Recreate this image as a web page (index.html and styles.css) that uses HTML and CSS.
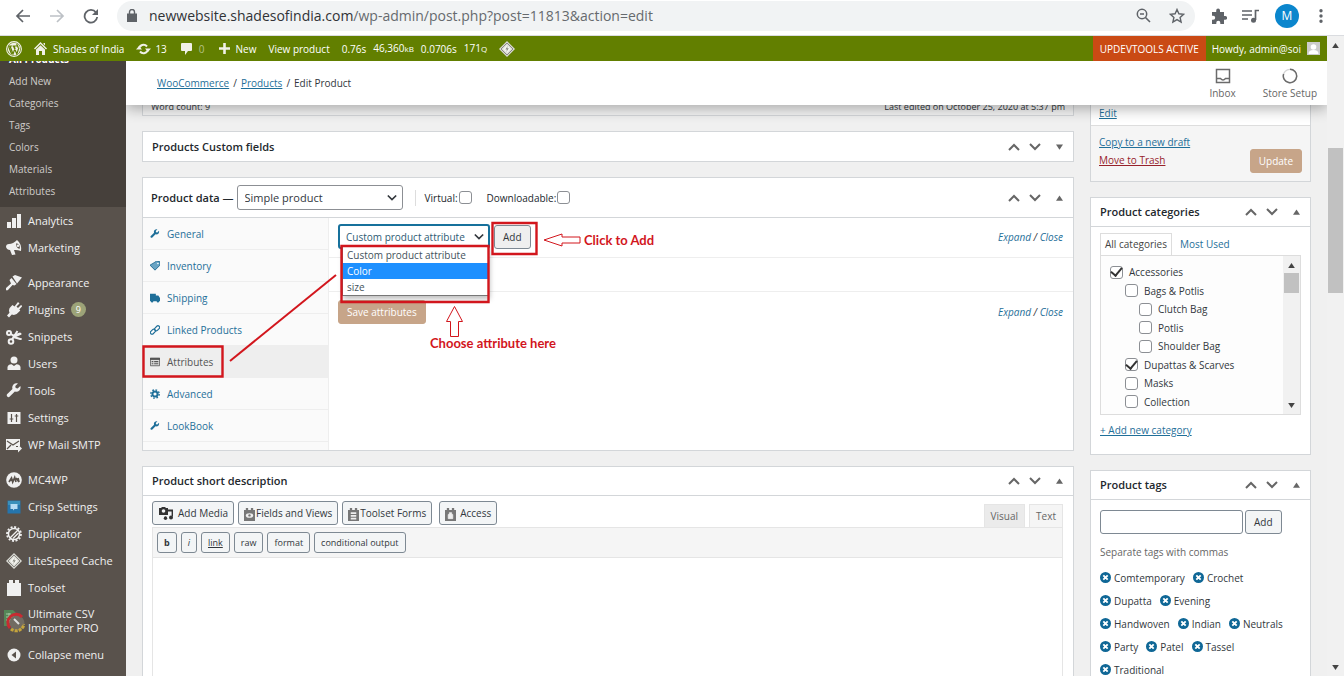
FILE: index.html
```html
<!DOCTYPE html>
<html lang="en">
<head>
<meta charset="utf-8">
<title>Edit Product</title>
<link rel="stylesheet" href="styles.css">
</head>
<body>
<svg class="defs" aria-hidden="true">
  <symbol id="up" viewBox="0 0 12 12"><path d="M1 9l5-5 5 5" fill="none" stroke="currentColor" stroke-width="2"/></symbol>
  <symbol id="down" viewBox="0 0 12 12"><path d="M1 3l5 5 5-5" fill="none" stroke="currentColor" stroke-width="2"/></symbol>
  <symbol id="tri" viewBox="0 0 8 6"><path d="M4 0l4 6H0z" fill="currentColor"/></symbol>
  <symbol id="trid" viewBox="0 0 8 6"><path d="M4 6l4-6H0z" fill="currentColor"/></symbol>
  <symbol id="wrench" viewBox="0 0 20 20"><path d="M16.7 9.3c-1.500 1.500-3.700 1.900-5.600 1.200L4.700 17c-.9.9-2.300.9-3.100 0-.9-.9-.9-2.300 0-3.100l6.500-6.500C7.400 5.500 7.800 3.300 9.300 1.800c1.500-1.500 3.700-1.900 5.600-1.200l-3.300 3.300.5 2.500 2.500.5 3.300-3.300c.7 2 .3 4.200-1.200 5.700z" fill="currentColor"/></symbol>
  <symbol id="diamond" viewBox="0 0 20 20"><path d="M10 0l10 10-10 10L0 10z" fill="#d9d9d3"/><path d="M10 2.500l7.500 7.500-7.500 7.500L2.500 10z" fill="none" stroke="#77756f" stroke-width="1"/><path d="M10 5l5 5-5 5-5-5z" fill="#f5f5f0"/><path d="M11 6l-3 4.500h2L9 14l3.200-4.800h-2z" fill="#8a8a80"/></symbol>
  <symbol id="brick" viewBox="0 0 16 16"><path d="M1 3h2V0h4v3h2V0h4v3h2v13H1z" fill="currentColor"/></symbol>
  <symbol id="x" viewBox="0 0 10 10"><circle cx="5" cy="5" r="5" fill="#0f6796"/><path d="M3 3l4 4M7 3L3 7" stroke="#fff" stroke-width="1.700"/></symbol>
</svg>

<header class="browser">
  <svg class="nav" viewBox="0 0 16 16"><path d="M15 8H2M8 2L2 8l6 6" fill="none" stroke="#5f6368" stroke-width="1.700"/></svg>
  <svg class="nav" viewBox="0 0 16 16"><path d="M1 8h13M8 2l6 6-6 6" fill="none" stroke="#bdc1c6" stroke-width="1.700"/></svg>
  <svg class="nav" viewBox="0 0 16 16"><path d="M13 4.500A6.300 6.300 0 1 0 14.200 9" fill="none" stroke="#5f6368" stroke-width="1.800"/><path d="M15 1v6H9z" fill="#5f6368"/></svg>
  <div class="address">
    <svg width="10" height="13" viewBox="0 0 10 13"><path d="M0 4.500h10V13H0z" fill="#5f6368"/><path d="M2.500 5V3a2.500 2.500 0 0 1 5 0v2" fill="none" stroke="#5f6368" stroke-width="1.400"/></svg>
    <span class="url">newwebsite.shadesofindia.com<span>/wp-admin/post.php?post=11813&amp;action=edit</span></span>
    <svg class="zoomico" width="15" height="15" viewBox="0 0 15 15"><circle cx="6" cy="6" r="4.700" fill="none" stroke="#5f6368" stroke-width="1.500"/><path d="M9.500 9.500L14 14M4 6h4" stroke="#5f6368" stroke-width="1.600"/></svg>
    <svg width="16" height="16" viewBox="0 0 16 16"><path d="M8 1.500l1.900 4.300 4.700.5-3.500 3.100 1 4.600L8 11.600 3.900 14l1-4.600L1.400 6.300l4.700-.5z" fill="none" stroke="#5f6368" stroke-width="1.400"/></svg>
  </div>
  <div class="tools">
    <svg width="16" height="16" viewBox="0 0 16 16"><path d="M1 4h4.200V2.500a1.900 1.900 0 0 1 3.800 0V4h4v4h1.200a1.900 1.900 0 0 1 0 3.800H13V16H9.300v-1.300a2 2 0 0 0-4 0V16H1v-4.200h1.200a2 2 0 0 0 0-4H1z" fill="#5f6368"/></svg>
    <svg width="18" height="14" viewBox="0 0 18 14"><path d="M0 2h10M0 6h10M0 10h6" stroke="#5f6368" stroke-width="1.700"/><path d="M13.500 11V1.500H17" fill="none" stroke="#5f6368" stroke-width="1.700"/><circle cx="11.500" cy="11.200" r="2.500" fill="#5f6368"/></svg>
    <span class="avatar">M</span>
    <svg width="4" height="14" viewBox="0 0 4 14"><path d="M2 0a1.700 1.700 0 1 1 0 3.400A1.700 1.700 0 0 1 2 0zm0 5.300a1.700 1.700 0 1 1 0 3.400 1.700 1.700 0 0 1 0-3.400zm0 5.300A1.700 1.700 0 1 1 2 14a1.700 1.700 0 0 1 0-3.400z" fill="#5f6368"/></svg>
  </div>
</header>

<div class="window">
<div class="site">
  <nav class="adminbar">
    <a href="#" aria-label="WordPress"><svg width="16" height="16" viewBox="0 0 16 16"><circle cx="8" cy="8" r="7.400" fill="none" stroke="#f0f0e8" stroke-width="1.100"/><circle cx="8" cy="8" r="6.200" fill="#f0f0e8"/><path d="M2.500 5.300l3.200 8M4 5l3 8 2-5.500L8 5M7.500 5l3.300 8L13 6.500M2.500 5h4M7 5h4M11 3c-.5 1.200 1.200 2 1 3.800" fill="none" stroke="#627f00" stroke-width="1.200"/></svg></a>
    <a href="#" class="home"><svg width="13" height="13" viewBox="0 0 13 13"><path d="M6.500 0L13 6.500l-1 1L6.500 2 1 7.500l-1-1zM2 7.500L6.500 3.200 11 7.500V13H8V9H5v4H2zM9.500 1H11v2.500L9.500 2z" fill="#f0f0e8"/></svg>Shades of India</a>
    <a href="#" class="upd"><svg width="15" height="12" viewBox="0 0 15 12"><path d="M3 6a4.500 4.500 0 0 1 8-2.500M12 6a4.500 4.500 0 0 1-8 2.500" fill="none" stroke="#f0f0e8" stroke-width="2"/><path d="M9 5.500h6L12 9zM0 6.500h6L3 3z" fill="#f0f0e8"/></svg>13</a>
    <a href="#" class="com"><svg width="11" height="12" viewBox="0 0 11 12"><path d="M1 0h9q1 0 1 1v6q0 1-1 1H7l-3 4V8H1Q0 8 0 7V1q0-1 1-1z" fill="#f0f0e8"/></svg><span>0</span></a>
    <a href="#" class="new"><svg width="11" height="11" viewBox="0 0 11 11"><path d="M5.500 0v11M0 5.500h11" stroke="#f0f0e8" stroke-width="2.600"/></svg>New</a>
    <a href="#">View product</a>
    <a href="#" class="stats"><span>0.76s</span><span>46,360<small>kB</small></span><span>0.0706s</span><span>171<small>Q</small></span></a>
    <a href="#" aria-label="LiteSpeed"><svg width="16" height="16"><use href="#diamond"/></svg></a>
    <a href="#" class="dev">UPDEVTOOLS ACTIVE</a>
    <a href="#" class="howdy">Howdy, admin@soi<svg width="13" height="13" viewBox="0 0 13 13"><path d="M0 0h13v13H0z" fill="#ccc"/><circle cx="6.500" cy="5" r="2.800" fill="#fff"/><path d="M1.500 12q0-4 5-4t5 4z" fill="#fff"/></svg></a>
  </nav>
  <div class="body">
    <nav class="sidebar">
      <ul class="submenu">
        <li><a href="#"><b>All Products</b></a></li><li><a href="#">Add New</a></li><li><a href="#">Categories</a></li><li><a href="#">Tags</a></li><li><a href="#">Colors</a></li><li><a href="#">Materials</a></li><li><a href="#">Attributes</a></li>
      </ul>
      <ul class="menu">
        <li><a href="#"><svg viewBox="0 0 16 16"><path d="M1 9h4v6H1zM6 5h4v10H6zM11 1h4v14h-4z"/></svg>Analytics</a></li>
        <li><a href="#"><svg viewBox="0 0 16 16"><path d="M0 7q0-3 3-3 4 0 8-4 5 4 4 11-4-1.500-7-1l1.500 4.500L6 15l-2-5Q1 10 0 7z"/><path d="M10.500 3q-1.500 4 3 6 1.500-4-3-6z" fill="#59524c"/><circle cx="12" cy="5.800" r="1.300"/></svg>Marketing</a></li>
      </ul>
      <ul class="menu">
        <li><a href="#"><svg viewBox="0 0 16 16"><path d="M6.500 1.500L9 0l7 2.500-5 6zM5.500 3l5 6-2 1.500-2-.5-4.500 5q-1.500 1-2.500-.5L0 13l5-4.500L3.500 5z"/></svg>Appearance</a></li>
        <li><a href="#"><svg viewBox="0 0 16 16"><path d="M12 0l1.500 1.500-3 3 1.500 1.500 3-3L16.500 4l-3.200 3.500 1 1-1.500 1.500q-3 4-7 2.500L3 15.500 1 13.500l2.500-2.800Q2 7 5 4.500l1.500-1.500 2 1.500z"/></svg>Plugins<span class="count">9</span></a></li>
        <li><a href="#"><svg viewBox="0 0 16 16"><path d="M6 6l8-2.500q2 .3 1.500 2L8 9"/><path d="M8 7l8 2.500q0 1.800-2 1.500L7 9z"/><g fill="none" stroke="#f0f0f0" stroke-width="2"><circle cx="3" cy="4" r="2"/><circle cx="5" cy="12.500" r="2.300"/><path d="M5 5l4 3M11.500 2L6 10.500"/></g></svg>Snippets</a></li>
        <li><a href="#"><svg viewBox="0 0 16 16"><circle cx="8" cy="4" r="3.500"/><path d="M1.500 14v-3Q2 8.500 5.500 8.200L8 10l2.500-1.800q3.500.3 4 2.800v3z"/></svg>Users</a></li>
        <li><a href="#"><svg><use href="#wrench"/></svg>Tools</a></li>
        <li><a href="#"><svg viewBox="0 0 16 16"><path d="M1.500 2h13v12h-13z"/><path d="M5.500 4v8M3.700 9h3.600M10.500 4v8M8.700 6h3.600" stroke="#59524c" stroke-width="1.200"/></svg>Settings</a></li>
        <li><a href="#"><svg viewBox="0 0 16 16"><path d="M0 2h14v7h-4v4H0z"/><path d="M1 4l6 4 6-4M1 12l4-4" fill="none" stroke="#59524c" stroke-width="1.200"/><path d="M8 10h4V7.500l4 4-4 4V13H8z"/></svg>WP Mail SMTP</a></li>
      </ul>
      <ul class="menu">
        <li><a href="#"><svg viewBox="0 0 16 16"><circle cx="8" cy="8" r="7.800"/><path d="M3 10l2.500-4 1.200 4 2-4.500L10 10M10 6l3 4-1-4" fill="none" stroke="#59524c" stroke-width="1.700"/></svg>MC4WP</a></li>
        <li><a href="#"><svg viewBox="0 0 16 16"><path d="M1.500 1.500h13v13h-13z" fill="#2575ad"/><path d="M2 2h12v4H2z" fill="#3990bb"/><path d="M4.500 5h7v5h-3l-1.500 1.500V10H4.500z" fill="#b5dcf4"/></svg>Crisp Settings</a></li>
        <li><a href="#"><svg viewBox="0 0 16 16"><circle cx="8" cy="8" r="7" fill="none" stroke="#f0f0f0" stroke-width="1.800" stroke-dasharray="2 1.660"/><circle cx="8" cy="8" r="5.600" fill="none" stroke="#f0f0f0" stroke-width="1.500"/><path d="M4 12l8-8M7 12.500L12.500 7" stroke="#f0f0f0" stroke-width="1.300"/></svg>Duplicator</a></li>
        <li><a href="#"><svg><use href="#diamond"/></svg>LiteSpeed Cache</a></li>
        <li><a href="#"><svg><use href="#brick"/></svg>Toolset</a></li>
        <li class="two"><a href="#"><svg class="csv" viewBox="0 0 22 24"><path d="M1 1h9l4 4v12H1z" fill="#548657"/><path d="M3 5h5M3 8h8M3 11h8M6 4v10" stroke="#a7c7a5"/><circle cx="14" cy="14" r="7.500" fill="#716b62"/><path d="M7 19a8 8 0 0 1 12-11" fill="none" stroke="#c72b32" stroke-width="3"/><path d="M8 20a8 8 0 0 0 13-5" fill="none" stroke="#c5a43c" stroke-width="3" stroke-dasharray="3 1"/><path d="M11 10l5 5" stroke="#ddd" stroke-width="2"/></svg><span>Ultimate CSV Importer PRO</span></a></li>
        <li><a href="#"><svg viewBox="0 0 16 16"><circle cx="8" cy="8" r="6.500"/><path d="M10 4.500v7L5.500 8z" fill="#59524c"/></svg>Collapse menu</a></li>
      </ul>
    </nav>
    <div class="content">
      <div class="wcbar">
        <div class="crumbs"><a href="#">WooCommerce</a><i>/</i><a href="#">Products</a><i>/</i><span>Edit Product</span></div>
        <div class="acts">
          <button class="act"><svg width="16" height="16" viewBox="0 0 16 16"><path d="M1.500 1.500h13v13h-13zM1.500 10.500h4q2.500 3 5 0h4" fill="none" stroke="#6b6b6b" stroke-width="1.500"/></svg>Inbox</button>
          <button class="act"><svg width="16" height="16" viewBox="0 0 16 16"><circle cx="8" cy="8" r="6.700" fill="none" stroke="#d5d5d5" stroke-width="1.200"/><path d="M8 1.300A6.700 6.700 0 1 1 1.600 6" fill="none" stroke="#6b6b6b" stroke-width="1.500"/></svg>Store Setup</button>
        </div>
      </div>
      <div class="columns">
        <main class="main">
          <section class="box status"><span>Word count: 9</span><span>Last edited on October 25, 2020 at 5:37 pm</span></section>
          <section class="box"><div class="head last"><h2>Products Custom fields</h2><div class="handles"><svg><use href="#up"/></svg><svg><use href="#down"/></svg><svg class="t"><use href="#trid"/></svg></div></div></section>
          <section class="box data">
            <div class="head tall">
              <h2>Product data —</h2>
              <span class="selwrap type"><select aria-label="Product type"><option>Simple product</option></select><svg><use href="#down"/></svg></span>
              <label class="opt first">Virtual:<input type="checkbox"></label>
              <label class="opt">Downloadable:<input type="checkbox"></label>
              <div class="handles"><svg><use href="#up"/></svg><svg><use href="#down"/></svg><svg class="t"><use href="#tri"/></svg></div>
            </div>
            <div class="split">
              <ul class="tabs">
                <li><a href="#"><svg><use href="#wrench"/></svg>General</a></li>
                <li><a href="#"><svg viewBox="0 0 12 12"><path d="M5 2l3-2 4 1v4L6 11 0 5z" fill="#69a4c4" stroke="#17658f"/><circle cx="9.500" cy="3" r="1" fill="#fff"/></svg>Inventory</a></li>
                <li><a href="#"><svg viewBox="0 0 12 12"><path d="M0 1h7v2h3l2 3v4h-1a1.500 1.500 0 0 1-3 0H4a1.500 1.500 0 0 1-3 0H0z" fill="currentColor"/></svg>Shipping</a></li>
                <li><a href="#"><svg viewBox="0 0 12 12"><g fill="none" stroke="currentColor" stroke-width="1.400"><rect x="5" y="2" width="7" height="4" rx="2" transform="rotate(-45 8.500 4)"/><rect x="0" y="6" width="7" height="4" rx="2" transform="rotate(-45 3.500 8)"/></g></svg>Linked Products</a></li>
                <li class="on"><a href="#"><svg viewBox="0 0 12 12"><path d="M.5 1.500h11v9H.5z" fill="#ddd" stroke="#555"/><path d="M0 1h12v2.500H0z" fill="#555"/><path d="M2 5.500h2M5 5.500h5M2 8h2M5 8h5" stroke="#555" stroke-width="1.300"/></svg>Attributes</a></li>
                <li><a href="#"><svg viewBox="0 0 12 12"><circle cx="6" cy="6" r="3.100" fill="none" stroke="currentColor" stroke-width="2.400"/><circle cx="6" cy="6" r="5" fill="none" stroke="currentColor" stroke-width="1.700" stroke-dasharray="2 1.927"/></svg>Advanced</a></li>
                <li><a href="#"><svg><use href="#wrench"/></svg>LookBook</a></li>
              </ul>
              <div class="panel">
                <div class="row tool">
                  <div class="selwrap attr"><select aria-label="Attribute"><option>Custom product attribute</option><option>Color</option><option>size</option></select><svg><use href="#down"/></svg>
                    <ul class="list" role="listbox"><li role="option">Custom product attribute</li><li role="option" class="hot" aria-selected="true">Color</li><li role="option">size</li></ul>
                  </div>
                  <button class="btn grey">Add</button>
                  <span class="exp"><a href="#">Expand</a> / <a href="#">Close</a></span>
                </div>
                <div class="row mid"></div>
                <div class="row save"><button class="btn tan">Save attributes</button><span class="exp"><a href="#">Expand</a> / <a href="#">Close</a></span></div>
              </div>
            </div>
            <svg class="marks" width="440" height="202" viewBox="0 0 440 202" fill="none" stroke="#d2161d">
              <path d="M1.500 169.500h79v30h-79zM350.500 46h44v31h-44zM199.500 69h147v56h-147z" stroke-width="2.400"/>
              <path d="M88 184L194 98" stroke-width="2"/>
              <path d="M402 63l18-6v3h18v6h-18v3z"/>
              <path d="M312.500 129.500l8 15h-4v15h-8v-15h-4z"/>
            </svg>
            <span class="note n1">Click to Add</span>
            <span class="note n2">Choose attribute here</span>
          </section>
          <section class="box desc">
            <div class="head"><h2>Product short description</h2><div class="handles"><svg><use href="#up"/></svg><svg><use href="#down"/></svg><svg class="t"><use href="#tri"/></svg></div></div>
            <div class="editor">
              <div class="media">
                <button class="btn"><svg class="cam" viewBox="0 0 14 14"><path d="M0 2h2l1-1h3l1 1h2v7H0z" fill="#333"/><circle cx="4.500" cy="5" r="1.800" fill="#f3f5f6"/><path d="M9 4.500h4.500v6M6.500 10.500V13" fill="none" stroke="#333" stroke-width="1.800"/><circle cx="12" cy="11.500" r="2" fill="#333"/><circle cx="6.500" cy="12.300" r="1.700" fill="#333"/></svg>Add Media</button>
                <button class="btn b"><svg viewBox="0 0 12 14"><path d="M0 2h2V0h2.500v2h3V0H10v2h2v12H0z" fill="#777"/><ellipse cx="6" cy="8" rx="4" ry="2.500" fill="#eee"/><circle cx="6" cy="8" r="1.300" fill="#777"/></svg>Fields and Views</button>
                <button class="btn b"><svg viewBox="0 0 12 14"><path d="M0 2h2V0h2.500v2h3V0H10v2h2v12H0z" fill="#777"/><path d="M3 5.500h6M3 8.500h6M3 11.500h6" stroke="#eee" stroke-width="1.700"/></svg>Toolset Forms</button>
                <button class="btn b acc"><svg viewBox="0 0 12 14"><path d="M0 2h2V0h2.500v2h3V0H10v2h2v12H0z" fill="#777"/><path d="M3.500 7h5v4.500h-5zM4.700 7V5h2.600v2" fill="#eee" stroke="#eee" stroke-width=".8"/></svg>Access</button>
                <div class="modes"><button>Visual</button><button class="on">Text</button></div>
              </div>
              <div class="qt"><button class="btn"><b>b</b></button><button class="btn"><i>i</i></button><button class="btn"><u>link</u></button><button class="btn">raw</button><button class="btn">format</button><button class="btn">conditional output</button></div>
              <textarea class="area" aria-label="Product short description"></textarea>
            </div>
          </section>
        </main>
        <aside class="side">
          <section class="box pub"><div class="edit"><a href="#">Edit</a></div><div class="major"><div class="links"><a href="#">Copy to a new draft</a><a href="#" class="trash">Move to Trash</a></div><button class="btn tan">Update</button></div></section>
          <section class="box cats">
            <div class="head"><h2>Product categories</h2><div class="handles"><svg><use href="#up"/></svg><svg><use href="#down"/></svg><svg class="t"><use href="#tri"/></svg></div></div>
            <div class="inside">
              <div class="ctabs"><a href="#" class="on">All categories</a><a href="#">Most Used</a></div>
              <div class="clist">
                <div class="checks">
                  <label><input type="checkbox" checked>Accessories</label>
                  <label class="l1"><input type="checkbox">Bags &amp; Potlis</label>
                  <label class="l2"><input type="checkbox">Clutch Bag</label>
                  <label class="l2"><input type="checkbox">Potlis</label>
                  <label class="l2"><input type="checkbox">Shoulder Bag</label>
                  <label class="l1"><input type="checkbox" checked>Dupattas &amp; Scarves</label>
                  <label class="l1"><input type="checkbox">Masks</label>
                  <label class="l1"><input type="checkbox">Collection</label>
                </div>
                <div class="sbar small"><svg width="9" height="5"><use href="#tri"/></svg><span class="thumb"></span><svg width="9" height="5"><use href="#trid"/></svg></div>
              </div>
              <a href="#" class="addcat">+ Add new category</a>
            </div>
          </section>
          <section class="box tags">
            <div class="head"><h2>Product tags</h2><div class="handles"><svg><use href="#up"/></svg><svg><use href="#down"/></svg><svg class="t"><use href="#tri"/></svg></div></div>
            <div class="inside">
              <div class="tagadd"><input type="text" aria-label="New tag"><button class="btn">Add</button></div>
              <p>Separate tags with commas</p>
              <ul class="taglist"><li><svg><use href="#x"/></svg>Comtemporary</li><li><svg><use href="#x"/></svg>Crochet</li></ul>
              <ul class="taglist"><li><svg><use href="#x"/></svg>Dupatta</li><li><svg><use href="#x"/></svg>Evening</li></ul>
              <ul class="taglist"><li><svg><use href="#x"/></svg>Handwoven</li><li><svg><use href="#x"/></svg>Indian</li><li><svg><use href="#x"/></svg>Neutrals</li></ul>
              <ul class="taglist"><li><svg><use href="#x"/></svg>Party</li><li><svg><use href="#x"/></svg>Patel</li><li><svg><use href="#x"/></svg>Tassel</li></ul>
              <ul class="taglist"><li><svg><use href="#x"/></svg>Traditional</li></ul>
            </div>
          </section>
        </aside>
      </div>
    </div>
  </div>
</div>
<div class="sbar"><svg width="9" height="5"><use href="#tri"/></svg><span class="thumb"></span><svg width="9" height="5"><use href="#trid"/></svg></div>
</div>
</body>
</html>
```

FILE: styles.css
```css
* { box-sizing: border-box; }
body { margin: 0; height: 100vh; overflow: hidden; display: flex; flex-direction: column; font: 10px/16px "Open Sans", "Noto Sans", sans-serif; color: #32373c; background: #f0f0f0; }
ul { list-style: none; margin: 0; padding: 0; }
button, input, select, textarea { font: inherit; color: inherit; margin: 0; }
button { cursor: pointer; }
svg { flex: none; display: block; }
a { color: #1f6f99; }
.defs { position: absolute; width: 0; height: 0; }

.browser { display: flex; align-items: center; flex: none; height: 36px; padding: 0 21px 4px 15px; background: #fff; border-bottom: 1px solid #dadce0; }
.nav { width: 16px; height: 16px; margin-right: 18px; }
.address { flex: 1; display: flex; align-items: center; height: 30px; margin-right: 16px; padding: 0 10px; border-radius: 15px; background: #f1f3f4; }
.url { flex: 1; margin-left: 12px; font-size: 14px; line-height: 24px; color: #303236; white-space: nowrap; }
.url span { color: #666a6e; }
.zoomico { margin-right: 18px; }
.tools { display: flex; align-items: center; gap: 15px; }
.avatar { width: 24px; height: 24px; border-radius: 50%; background: #0b86cd; color: #fff; font-size: 12px; line-height: 24px; text-align: center; }
.tools svg:last-child { margin-left: 5px; }

.window { flex: 1; min-height: 0; display: flex; }
.site { flex: 1; min-width: 0; display: flex; flex-direction: column; }
.sbar { flex: none; width: 17px; display: flex; flex-direction: column; align-items: center; padding: 7px 0 6px; background: #f1f1f1; color: #444; }
.sbar .thumb { width: 15px; height: 145px; margin: 100px 0 auto; background: #c1c1c1; }

.adminbar { flex: none; display: flex; align-items: center; height: 25px; padding-left: 6px; background: #627f00; color: #fff; white-space: nowrap; }
.adminbar a { display: flex; align-items: center; margin-right: 12px; color: inherit; text-decoration: none; }
.adminbar .home { gap: 6px; }
.adminbar .upd { gap: 4px; margin-right: 14px; }
.adminbar .com { gap: 7px; margin-right: 14px; }
.adminbar .com span { color: #b5c284; }
.adminbar .new { gap: 6px; }
.adminbar .stats { gap: 7px; }
.adminbar small { font-size: 8px; }
.adminbar .dev { height: 25px; margin: 0 0 0 auto; padding: 0 7px; background: #ca4a14; }
.adminbar .howdy { gap: 6px; margin: 0; padding: 0 7px 0 6px; }

.body { flex: 1; min-height: 0; display: flex; }
.sidebar { flex: none; width: 126px; overflow: hidden; background: #59524c; }
.sidebar a { display: flex; align-items: center; text-decoration: none; color: #f0f0f0; white-space: nowrap; }
.submenu { margin-top: -13px; padding-bottom: 5px; background: #46403b; }
.submenu a { height: 22px; padding-left: 9px; color: #cfccca; }
.submenu b { color: #fff; }
.menu { margin-bottom: 8px; font-size: 11px; }
.menu a { height: 27px; padding-left: 6px; gap: 6px; }
.menu svg { width: 16px; height: 16px; fill: #f0f0f0; color: #f0f0f0; }
.menu .two a { height: 40px; line-height: 14px; white-space: normal; padding-left: 3px; gap: 3px; }
.menu .csv { width: 22px; height: 24px; }
.count { width: 15px; height: 15px; border-radius: 50%; background: #9ca378; color: #fff; font-size: 9px; line-height: 15px; text-align: center; }

.content { flex: 1; min-width: 0; display: flex; flex-direction: column; overflow: hidden; }
.wcbar { position: relative; z-index: 3; flex: none; display: flex; justify-content: space-between; align-items: center; height: 44px; padding: 0 10px 0 31px; background: #fff; box-shadow: 0 4px 14px rgba(0, 0, 0, .3); }
.crumbs { display: flex; gap: 4px; }
.crumbs i { font-style: normal; }
.acts { display: flex; gap: 27px; }
.act { display: flex; flex-direction: column; align-items: center; gap: 1px; padding: 2px 0 0; border: 0; background: none; color: #666; }
.columns { flex: 1; min-height: 0; display: flex; gap: 16px; padding: 0 16px; }
.main { flex: 1; min-width: 0; display: flex; flex-direction: column; gap: 15px; }
.side { flex: none; width: 221px; display: flex; flex-direction: column; gap: 15px; }
.box { flex: none; background: #fff; border: 1px solid #d3d6d9; }
.head { display: flex; align-items: center; height: 29px; padding: 0 10px 0 9px; border-bottom: 1px solid #d3d6d9; white-space: nowrap; }
.head.last { height: 29px; border: 0; }
.head.tall { height: 40px; padding-left: 8px; }
h2 { margin: 0; font-size: 11px; font-weight: 600; color: #23282d; }
.handles { display: flex; align-items: center; margin-left: auto; color: #666; }
.handles svg { width: 12px; height: 12px; margin-right: 9px; }
.handles .t { width: 7px; height: 6px; margin: 0 0 0 6px; }
.status { display: flex; justify-content: space-between; height: 30px; margin-top: -19px; padding: 12px 8px 0; background: #f4f4f4; font-size: 9px; }

input[type=checkbox] { appearance: none; flex: none; width: 13px; height: 13px; border: 1px solid #8c8f94; border-radius: 3px; background: #fff; display: grid; place-items: center; }
input[type=checkbox]:checked::before { content: ""; width: 9px; height: 5px; margin-top: -3px; border: solid #333; border-width: 0 0 2px 2px; transform: rotate(-50deg); }
.selwrap { position: relative; flex: none; }
.selwrap select { appearance: none; display: block; width: 100%; height: 25px; padding: 0 7px; border: 1px solid #8c8f94; border-radius: 3px; background: #fff; font-size: 11px; color: #32373c; }
.selwrap > svg { position: absolute; right: 6px; top: 8px; width: 10px; height: 10px; pointer-events: none; }
.type { width: 166px; margin: 0 12px 0 3px; }
.opt { display: flex; align-items: center; gap: 1px; margin-right: 15px; color: #23282d; }
.opt.first { padding-left: 9px; border-left: 1px solid #ddd; }
.btn { display: flex; align-items: center; justify-content: center; height: 24px; padding: 0 8px; border: 1px solid #7e8993; border-radius: 3px; background: #f3f5f6; white-space: nowrap; }
.btn.tan { background: #c7a589; border-color: #c7a589; color: #fff; }
.btn.grey { background: #efefef; }

.data { position: relative; }
.split { display: flex; }
.tabs { flex: none; width: 186px; padding-bottom: 8px; background: #fafafa; border-right: 1px solid #eee; }
.tabs a { display: flex; align-items: center; gap: 7px; height: 32px; padding-left: 7px; border-bottom: 1px solid #eee; text-decoration: none; }
.tabs svg { width: 10px; height: 10px; }
.tabs .on a { background: #eee; color: #555; }
.panel { flex: 1; }
.row { display: flex; align-items: center; padding: 0 10px 0 9px; border-bottom: 1px solid #eee; }
.row.tool { height: 40px; gap: 4px; padding-bottom: 2px; }
.row.mid { height: 34px; }
.row.save { height: 40px; border: 0; }
.attr { width: 152px; }
.attr select { border: 2px solid #17719c; color: #2e5a73; padding: 0 6px; font-size: 10px; }
.exp { margin-left: auto; font-style: italic; }
.exp a { text-decoration: none; }
.list { position: absolute; z-index: 1; top: 22px; left: 4px; width: 147px; border: 1px solid #777; background: #fff; color: #44525c; line-height: 16px; white-space: nowrap; box-shadow: 1px 3px 5px rgba(0, 0, 0, .25); }
.list li { padding-left: 4px; }
.list .hot { background: #1e90ff; color: #fff; }
.marks { position: absolute; z-index: 2; left: -1px; top: -1px; pointer-events: none; }
.note { position: absolute; font: 700 13px/16px Lato, "Open Sans", sans-serif; color: #d2161d; }
.n1 { left: 441px; top: 54px; }
.n2 { left: 287px; top: 157px; }

.editor { padding: 5px 10px 0 9px; }
.media { display: flex; align-items: flex-start; gap: 4px; height: 26px; }
.media svg { width: 11px; height: 13px; margin-top: 2px; }
.media .btn { gap: 1px; padding: 0 5px; }
.media .btn svg.cam { width: 14px; height: 14px; margin: 0 4px 0 1px; }
.media .acc { gap: 4px; margin-left: 3px; }
.modes { display: flex; gap: 4px; margin: 3px 0 0 auto; }
.modes button { height: 23px; padding: 0 6px; border: 1px solid #e5e5e5; border-bottom: 0; background: #ebebeb; color: #666; }
.modes .on { background: #f5f5f5; }
.qt { display: flex; gap: 4px; padding: 4px; height: 31px; border: 1px solid #e5e5e5; background: #f5f5f5; }
.qt .btn { height: 21px; padding: 0 6px; font-size: 9px; }
.area { display: block; width: 100%; height: 300px; border: 1px solid #e5e5e5; border-top: 0; background: #fff; resize: none; }

.pub { margin-top: -20px; padding-top: 19px; }
.edit { height: 21px; padding: 0 8px; border-bottom: 1px solid #ddd; }
.major { display: flex; justify-content: space-between; align-items: flex-end; padding: 8px; height: 55px; background: #f5f5f5; }
.links { display: flex; flex-direction: column; gap: 2px; align-self: flex-start; }
.links .trash { color: #97222b; }
.inside { padding: 6px 9px 0; }
.ctabs { display: flex; }
.ctabs a { height: 22px; padding: 3px 8px 0; text-decoration: none; white-space: nowrap; }
.ctabs .on { position: relative; padding: 2px 4px 0; margin-bottom: -1px; border: 1px solid #ddd; border-bottom: 0; background: #fff; color: #444; }
.clist { display: flex; height: 160px; border: 1px solid #ddd; background: #fdfdfd; }
.checks { flex: 1; display: grid; grid-auto-rows: 1fr; padding: 7px 9px 3px; }
.checks label { display: flex; align-items: center; gap: 6px; white-space: nowrap; }
.checks .l1 { margin-left: 15px; }
.checks .l2 { margin-left: 29px; }
.small .thumb { height: 20px; margin-top: 5px; }
.addcat { display: block; margin-top: 7px; }
.cats { height: 258px; }
.tags .inside { padding-top: 10px; }
.tagadd { display: flex; gap: 2px; }
.tagadd input { width: 143px; height: 24px; border: 1px solid #7e8993; border-radius: 3px; background: #fff; }
.tags p { margin: 10px 0 6px; color: #666; }
.taglist { display: flex; flex-wrap: wrap; column-gap: 8px; }
.taglist li { display: flex; align-items: center; gap: 3px; height: 23px; }
.taglist svg { width: 11px; height: 11px; }
```
